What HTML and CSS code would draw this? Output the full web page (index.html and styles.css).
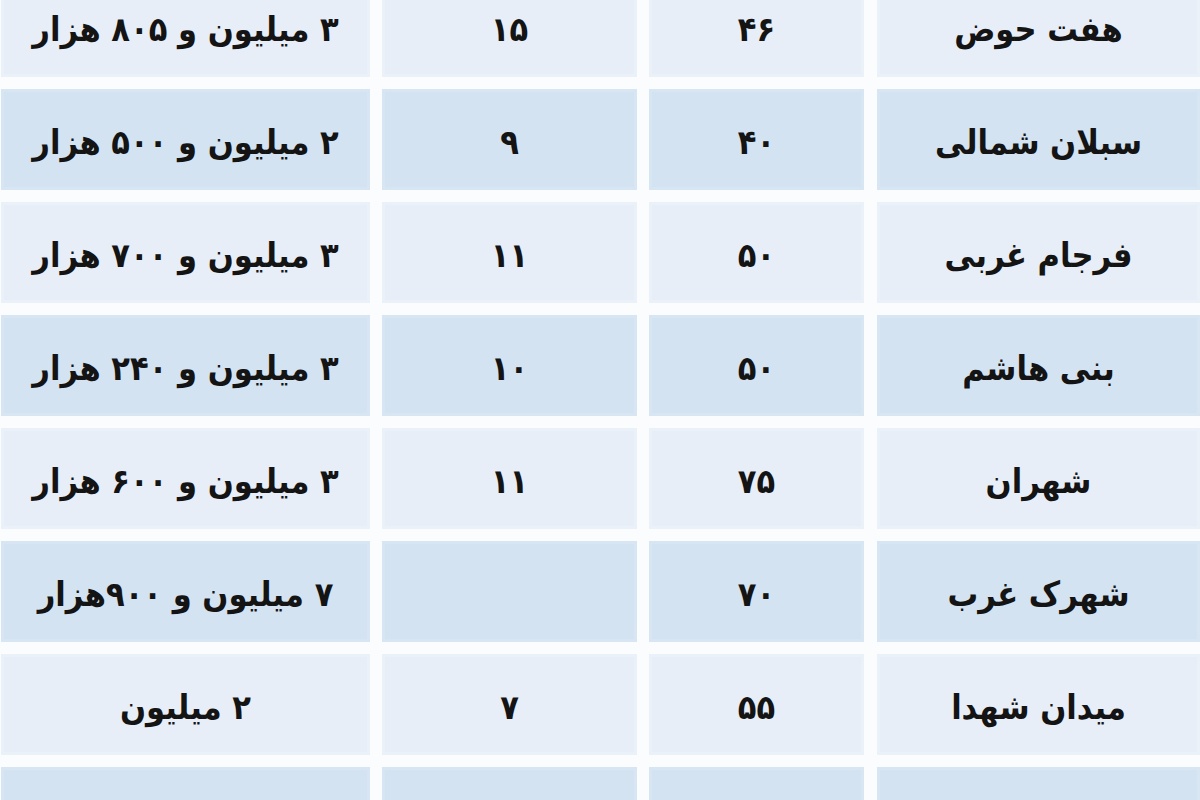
FILE: index.html
```html
<!DOCTYPE html>
<html lang="fa" dir="rtl">
<head>
<meta charset="utf-8">
<title>جدول اجاره</title>
<link rel="stylesheet" href="styles.css">
</head>
<body>
<div class="table">
  <div class="row light"><div class="cell name">هفت حوض</div><div class="cell area">۴۶</div><div class="cell age">۱۵</div><div class="cell price">۳ میلیون و ۸۰۵ هزار</div></div>
  <div class="row blue"><div class="cell name">سبلان شمالی</div><div class="cell area">۴۰</div><div class="cell age">۹</div><div class="cell price">۲ میلیون و ۵۰۰ هزار</div></div>
  <div class="row light"><div class="cell name">فرجام غربی</div><div class="cell area">۵۰</div><div class="cell age">۱۱</div><div class="cell price">۳ میلیون و ۷۰۰ هزار</div></div>
  <div class="row blue"><div class="cell name">بنی هاشم</div><div class="cell area">۵۰</div><div class="cell age">۱۰</div><div class="cell price">۳ میلیون و ۲۴۰ هزار</div></div>
  <div class="row light"><div class="cell name">شهران</div><div class="cell area">۷۵</div><div class="cell age">۱۱</div><div class="cell price">۳ میلیون و ۶۰۰ هزار</div></div>
  <div class="row blue"><div class="cell name">شهرک غرب</div><div class="cell area">۷۰</div><div class="cell age"></div><div class="cell price">۷ میلیون و ۹۰۰هزار</div></div>
  <div class="row light"><div class="cell name">میدان شهدا</div><div class="cell area">۵۵</div><div class="cell age">۷</div><div class="cell price">۲ میلیون</div></div>
  <div class="row blue"><div class="cell name">تهرانپارس</div><div class="cell area">۶۰</div><div class="cell age">۱۰</div><div class="cell price">۳ میلیون و ۳۰۰ هزار</div></div>
</div>
</body>
</html>
```

FILE: styles.css
```css
html, body {
  margin: 0;
  padding: 0;
  background: #fafcfe;
  overflow: hidden;
  height: 800px;
}
body {
  font-family: "DejaVu Sans Condensed", "DejaVu Sans", "Noto Sans", sans-serif;
  color: #141414;
}
.table {
  display: flex;
  flex-direction: column;
  gap: 12px;
  margin-top: -24px;
}
.row {
  display: grid;
  grid-template-columns: 324px 215px 255px 369px;
  column-gap: 12px;
  height: 101px;
}
.row .cell:first-child { margin-left: 1px; }
.cell {
  display: flex;
  align-items: center;
  justify-content: center;
  font-size: 34px;
  font-weight: bold;
  padding-top: 4px;
  box-sizing: border-box;
  white-space: nowrap;
}
.light .cell {
  background: #e7eef8;
  box-shadow: inset 0 0 0 3px #ebf1f9;
}
.blue .cell {
  background: #d3e3f2;
  box-shadow: inset 0 0 0 3px #d8e6f4;
}
```
